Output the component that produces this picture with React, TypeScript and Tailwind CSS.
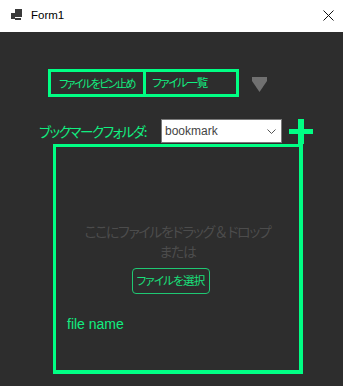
import React from "react";

// WinForms-style dark window with a drop area
const jp = "whitespace-nowrap font-['Noto_Sans_CJK_JP','Noto_Sans',sans-serif] [font-feature-settings:'palt']";

function TitleBar() {
  return (
    <div className="flex h-[32px] items-center bg-white pl-[11px] pr-[9px]">
      <svg width="12" height="12" viewBox="0 0 12 12" className="mb-[2px]">
        <rect x="4" y="0" width="7" height="8" fill="#3a3a3a" />
        <rect x="0" y="4" width="4" height="6" fill="#3a3a3a" />
        <rect x="4" y="9" width="6" height="2" fill="#3a3a3a" />
      </svg>
      <span className="ml-[8px] font-['Liberation_Sans',sans-serif] text-[11.5px] text-black">
        Form1
      </span>
      <svg width="11" height="11" viewBox="0 0 11 11" className="ml-auto mb-[1px]">
        <path d="M0.5 0.5L10.5 10.5M10.5 0.5L0.5 10.5" stroke="#111" strokeWidth="1" />
      </svg>
    </div>
  );
}

export default function App() {
  return (
    <div className="h-[386px] w-[343px] overflow-hidden bg-[#2d2d2d]">
      <TitleBar />

      {/* top buttons */}
      <div className="ml-[48px] mt-[37px] flex items-center">
        <div className="flex h-[28px] border-[3px] border-[#00ff84]">
          <div
            className={`flex w-[92px] items-center pl-[8px] text-[11px] tracking-[-1.6px] text-[#11ee80] ${jp}`}
          >
            ファイルをピン止め
          </div>
          <div className="w-[3px] bg-[#00ff84]" />
          <div
            className={`flex w-[90px] items-center pl-[6px] text-[11.5px] tracking-[-1.3px] text-[#11ee80] ${jp}`}
          >
            ファイル一覧
          </div>
        </div>
        <svg width="15" height="15" viewBox="0 0 15 15" className="ml-[13px] mt-[2px]">
          <path d="M0 0H15V4L7.5 15L0 4Z" fill="#707070" />
        </svg>
      </div>

      {/* bookmark folder row */}
      <div className="ml-[39px] mt-[21px] flex h-[26px] items-center">
        <span className={`w-[122px] text-[13.5px] tracking-[-1.4px] text-[#11ee80] ${jp}`}>
          ブックマークフォルダ:
        </span>
        <div className="flex h-[24px] w-[121px] items-center border border-[#7a7a7a] bg-white pl-[3px] pr-[5px]">
          <span className="font-['Liberation_Sans',sans-serif] text-[12px] text-[#444]">
            bookmark
          </span>
          <svg width="9" height="5" viewBox="0 0 9 5" className="ml-auto">
            <path d="M0.5 0.5L4.5 4.5L8.5 0.5" stroke="#555" strokeWidth="1" fill="none" />
          </svg>
        </div>
        <svg width="24" height="25" viewBox="0 0 24 25" className="ml-[7px]">
          <rect x="9" y="0" width="6" height="25" fill="#00ff84" />
          <rect x="0" y="10" width="24" height="5" fill="#00ff84" />
        </svg>
      </div>

      {/* drop area */}
      <div className="ml-[53px] flex h-[230px] w-[250px] flex-col items-center border-[3px] border-b-4 border-r-4 border-[#00ff84]">
        <div
          className={`mt-[74px] text-center text-[14px] leading-[20px] tracking-[-1.4px] text-[#4c4c4c] ${jp}`}
        >
          ここにファイルをドラッグ ＆ ドロップ
          <br />
          または
        </div>
        <button
          className={`mr-[14px] mt-[7px] h-[26px] w-[78px] rounded-[4px] border border-[#1fc873] text-[11.5px] tracking-[-0.8px] text-[#19e07c] ${jp}`}
        >
          ファイルを選択
        </button>
        <div className="ml-[11px] mt-[20px] self-start font-['Liberation_Sans',sans-serif] text-[14px] leading-[20px] text-[#11ee80]">
          file name
        </div>
      </div>
    </div>
  );
}
